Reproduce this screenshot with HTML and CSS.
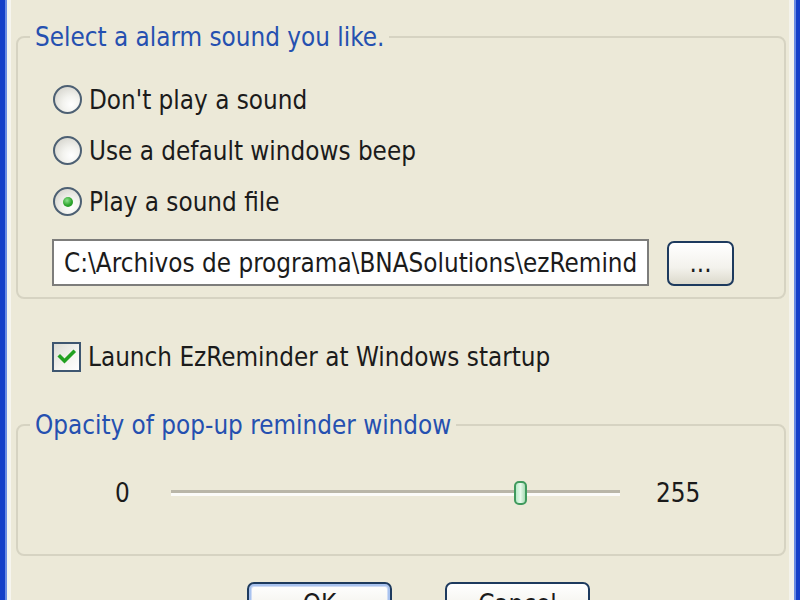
FILE: index.html
```html
<!DOCTYPE html>
<html>
<head>
<meta charset="utf-8">
<link rel="stylesheet" href="styles.css">
</head>
<body>
<div class="frame">
  <fieldset class="group group-sound">
    <legend class="group-title">Select a alarm sound you like.</legend>
    <div class="option"><span class="radio"></span><span class="label">Don't play a sound</span></div>
    <div class="option"><span class="radio"></span><span class="label">Use a default windows beep</span></div>
    <div class="option"><span class="radio checked"></span><span class="label">Play a sound file</span></div>
    <div class="file-row">
      <div class="textbox">C:\Archivos de programa\BNASolutions\ezRemind</div>
      <div class="btn btn-browse">...</div>
    </div>
  </fieldset>

  <div class="check-row">
    <span class="checkbox">
      <svg width="20" height="18" viewBox="0 0 20 18"><path d="M3 8.5 L7.5 13 L16.5 4" fill="none" stroke="#21a121" stroke-width="3.6" stroke-linecap="square"/></svg>
    </span>
    <span class="label">Launch EzReminder at Windows startup</span>
  </div>

  <fieldset class="group group-opacity">
    <legend class="group-title">Opacity of pop-up reminder window</legend>
    <div class="slider-row">
      <span class="val val-min">0</span>
      <div class="track"><span class="thumb"></span></div>
      <span class="val val-max">255</span>
    </div>
  </fieldset>

  <div class="buttons">
    <div class="btn btn-main btn-default">OK</div>
    <div class="btn btn-main">Cancel</div>
  </div>
</div>
</body>
</html>
```

FILE: styles.css
```css
html, body {
  margin: 0;
  padding: 0;
  height: 100%;
  overflow: hidden;
}
body {
  background: #ece9d8;
  font-family: "DejaVu Sans Condensed", "DejaVu Sans", sans-serif;
  font-stretch: condensed;
  font-size: 25.8px;
  color: #1b1b1b;
}
.frame {
  height: 600px;
  box-sizing: border-box;
  padding: 22px 14px 0 16px;
  display: flex;
  flex-direction: column;
  background: linear-gradient(to right,
    #1540c8 0, #1540c8 5px,
    #6a8ce2 5px, #6a8ce2 7px,
    #f6f5ef 7px, #f6f5ef 11px,
    #ece9d8 11px, #ece9d8 789px,
    #f4f3ec 789px, #f4f3ec 794px,
    #6a8ce2 794px, #6a8ce2 796px,
    #1540c8 796px);
}
.frame > * {
  flex: none;
}
.group {
  margin: 0;
  border: 2px solid #d6d3c2;
  border-radius: 8px;
  min-width: 0;
}
.group-title {
  color: #2550b0;
  line-height: 30px;
  padding: 0 5px;
  margin-left: 12px;
}
.group-sound {
  padding: 22px 0 11px 35px;
}
.group-sound .group-title {
  margin-left: -23px;
}
.option {
  height: 51px;
  display: flex;
  align-items: center;
}
.radio {
  width: 25px;
  height: 25px;
  border: 2px solid #4d6073;
  border-radius: 50%;
  background: radial-gradient(circle at 65% 70%, #ffffff 0, #f3f3ef 35%, #d9d8d1 80%);
  margin-right: 7px;
  display: flex;
  align-items: center;
  justify-content: center;
  flex: none;
}
.radio.checked::after {
  content: "";
  width: 10px;
  height: 10px;
  border-radius: 50%;
  background: radial-gradient(circle at 40% 35%, #8fe38f 0, #2ea52e 55%, #1b8a1b 100%);
}
.file-row {
  display: flex;
  align-items: flex-end;
  margin-top: 12px;
}
.textbox {
  width: 583px;
  height: 43px;
  border: 2px solid #7d7d7b;
  background: #fff;
  padding-left: 10px;
  box-sizing: content-box;
  display: flex;
  align-items: center;
  white-space: nowrap;
  overflow: hidden;
  margin-left: -1px;
}
.btn {
  border: 2px solid #1d3a5e;
  border-radius: 7px;
  background: linear-gradient(#ffffff, #f3f2ec 60%, #dcd9cc);
  display: flex;
  justify-content: center;
  box-sizing: border-box;
}
.btn-browse {
  width: 67px;
  height: 45px;
  margin-left: 18px;
  align-items: flex-end;
  padding-bottom: 6px;
}
.check-row {
  display: flex;
  align-items: center;
  height: 32px;
  margin-top: 42px;
  padding-left: 36px;
}
.checkbox {
  width: 25px;
  height: 26px;
  border: 2px solid #3e5670;
  background: linear-gradient(135deg, #dcdcd4, #f5f5f1 60%, #ffffff);
  margin-right: 7px;
  display: flex;
  align-items: center;
  justify-content: center;
  flex: none;
}
.group-opacity {
  margin-top: 37px;
  padding: 27px 0 0 0;
  height: 146px;
  box-sizing: border-box;
}
.slider-row {
  display: flex;
  align-items: center;
  height: 52px;
}
.val-min {
  margin-left: 97px;
  width: 14px;
}
.track {
  margin-left: 42px;
  width: 449px;
  height: 6px;
  border-top: 3px solid #b9b6a8;
  border-bottom: 3px solid #fbfbf8;
  box-sizing: border-box;
  position: relative;
}
.thumb {
  position: absolute;
  left: 343px;
  top: -12px;
  width: 9px;
  height: 20px;
  border: 2px solid #3f9a5d;
  border-radius: 5px;
  background: linear-gradient(to right, #b9ecc8, #e6f8ea 50%, #a9dcb6);
}
.val-max {
  margin-left: 36px;
}
.buttons {
  display: flex;
  margin-top: 26px;
  padding-left: 231px;
  gap: 53px;
}
.btn-main {
  width: 145px;
  height: 46px;
  align-items: flex-start;
  padding-top: 5px;
  line-height: 30px;
}
.btn-default {
  box-shadow: inset 0 0 0 2px #a9c3ef, inset 0 0 0 3px #cfdcf5;
}
```
